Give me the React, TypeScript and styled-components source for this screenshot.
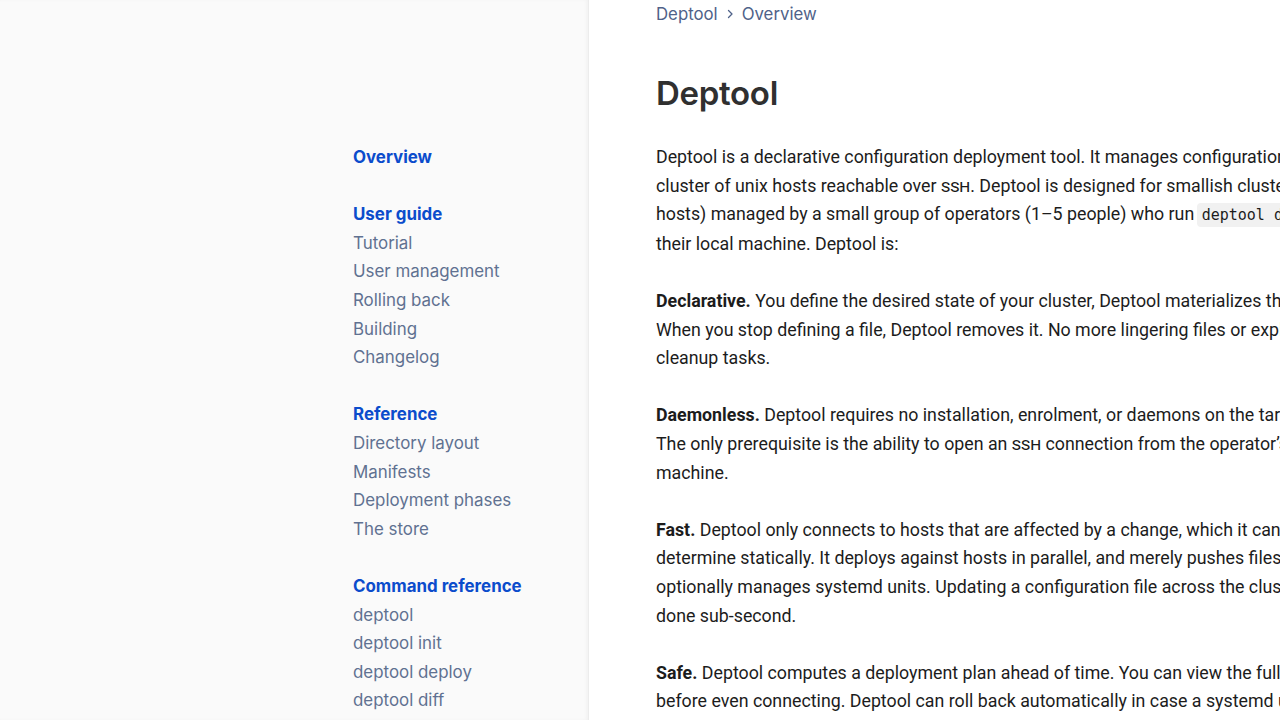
import React from 'react';
import styled, { createGlobalStyle } from 'styled-components';

const GlobalStyle = createGlobalStyle`
  html, body {
    margin: 0;
    padding: 0;
    background: #ffffff;
    overflow: hidden;
  }
  body {
    font-family: Inter, "Noto Sans", sans-serif;
    -webkit-font-smoothing: antialiased;
  }
`;

const Page = styled.div`
  display: flex;
  width: 1280px;
  height: 720px;
  overflow: hidden;
`;

const Sidebar = styled.aside`
  flex: 0 0 588px;
  display: flex;
  justify-content: flex-end;
  background: #fafafa;
  border-right: 1px solid #ececec;
  box-shadow: inset -2px 0 3px rgba(0, 0, 0, 0.03);
`;

const Nav = styled.nav`
  width: 235px;
  padding-top: 143px;
  font-size: 16.9px;
  line-height: 28.6px;
`;

const NavSection = styled.div`
  margin-bottom: 28.6px;
`;

const NavHeading = styled.a`
  display: block;
  color: #0b4ccc;
  font-weight: 700;
  text-decoration: none;
`;

const NavLink = styled.a`
  display: block;
  color: #607191;
  text-decoration: none;
  white-space: nowrap;
`;

const Main = styled.main`
  flex: 1;
  padding-left: 67px;
  min-width: 0;
`;

const Breadcrumb = styled.div`
  display: flex;
  align-items: center;
  gap: 8px;
  height: 28px;
  font-size: 16.8px;
  color: #4f6289;
`;

const Crumb = styled.a`
  color: inherit;
  text-decoration: none;
`;

const Title = styled.h1`
  margin: 44px 0 29px;
  font-size: 33px;
  line-height: 42px;
  font-weight: 600;
  letter-spacing: -0.3px;
  color: #303030;
`;

const Content = styled.div`
  font-family: Roboto, "Liberation Sans", sans-serif;
  font-size: 17.8px;
  line-height: 28.6px;
  color: #1c1c1c;
  white-space: nowrap;
`;

const Para = styled.p`
  margin: 0 0 28.6px;
`;

const Term = styled.strong`
  font-weight: 700;
`;

const SmallCaps = styled.span`
  font-variant: small-caps;
  text-transform: lowercase;
`;

const Code = styled.code`
  font-family: "DejaVu Sans Mono", "Liberation Mono", monospace;
  font-size: 15px;
  background: #f1f1f1;
  border-radius: 4px;
  padding: 3px 5px;
  margin-left: -2px;
`;

const Chevron = () => (
  <svg width="8" height="10" viewBox="0 0 8 10" fill="none">
    <path d="M2.5 1.5 L6 5 L2.5 8.5" stroke="#4f6289" strokeWidth="1.3" strokeLinecap="round" strokeLinejoin="round" />
  </svg>
);

const sections = [
  { title: 'Overview', items: [] as string[] },
  { title: 'User guide', items: ['Tutorial', 'User management', 'Rolling back', 'Building', 'Changelog'] },
  { title: 'Reference', items: ['Directory layout', 'Manifests', 'Deployment phases', 'The store'] },
  {
    title: 'Command reference',
    items: ['deptool', 'deptool init', 'deptool deploy', 'deptool diff', 'deptool rollback', 'deptool status'],
  },
];

export default function App() {
  return (
    <>
      <GlobalStyle />
      <Page>
        <Sidebar>
          <Nav>
            {sections.map((s) => (
              <NavSection key={s.title}>
                <NavHeading href="#">{s.title}</NavHeading>
                {s.items.map((item) => (
                  <NavLink key={item} href="#">{item}</NavLink>
                ))}
              </NavSection>
            ))}
          </Nav>
        </Sidebar>
        <Main>
          <Breadcrumb>
            <Crumb href="#">Deptool</Crumb>
            <Chevron />
            <Crumb href="#">Overview</Crumb>
          </Breadcrumb>
          <Title>Deptool</Title>
          <Content>
            <Para>
              Deptool is a declarative configuration deployment tool. It manages configuration files on a<br />
              cluster of unix hosts reachable over <SmallCaps>SSH</SmallCaps>. Deptool is designed for smallish clusters (1–20<br />
              hosts) managed by a small group of operators (1–5 people) who run <Code>deptool deploy</Code> from<br />
              their local machine. Deptool is:
            </Para>
            <Para>
              <Term>Declarative.</Term> You define the desired state of your cluster, Deptool materializes that state.<br />
              When you stop defining a file, Deptool removes it. No more lingering files or explicit<br />
              cleanup tasks.
            </Para>
            <Para>
              <Term>Daemonless.</Term> Deptool requires no installation, enrolment, or daemons on the target hosts.<br />
              The only prerequisite is the ability to open an <SmallCaps>SSH</SmallCaps> connection from the operator’s<br />
              machine.
            </Para>
            <Para>
              <Term>Fast.</Term> Deptool only connects to hosts that are affected by a change, which it can<br />
              determine statically. It deploys against hosts in parallel, and merely pushes files and<br />
              optionally manages systemd units. Updating a configuration file across the cluster is<br />
              done sub-second.
            </Para>
            <Para>
              <Term>Safe.</Term> Deptool computes a deployment plan ahead of time. You can view the full diff<br />
              before even connecting. Deptool can roll back automatically in case a systemd unit<br />
              fails to start.
            </Para>
          </Content>
        </Main>
      </Page>
    </>
  );
}
